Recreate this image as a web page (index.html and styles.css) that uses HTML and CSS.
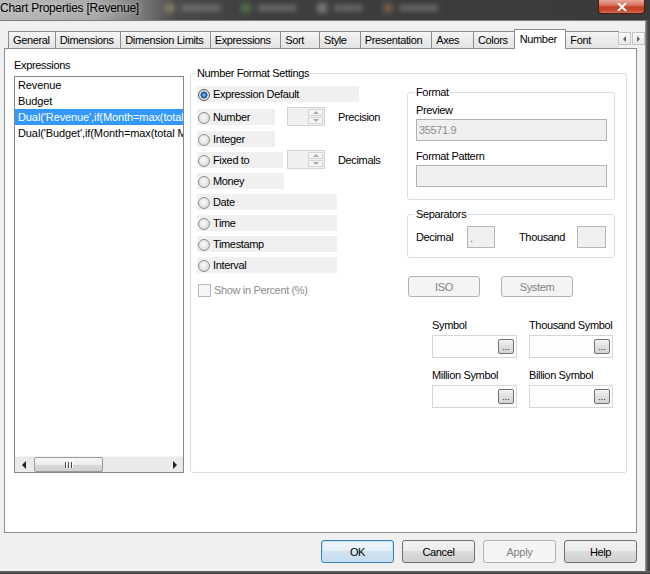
FILE: index.html
```html
<!DOCTYPE html>
<html>
<head>
<meta charset="utf-8">
<link rel="stylesheet" href="styles.css">
</head>
<body>
<div class="window">
  <div class="titlebar">
    <span class="title">Chart Properties [Revenue]</span>
    <div class="blurs">
      <span class="bl ic y"></span><span class="bl tx w40"></span>
      <span class="bl ic g"></span><span class="bl tx w40"></span>
      <span class="bl ic w"></span><span class="bl tx w30"></span>
      <span class="bl ic o"></span><span class="bl tx w40"></span>
    </div>
    <div class="close"><svg width="10" height="8" viewBox="0 0 10 8"><path d="M1.5 0.5 L8.5 7.5 M8.5 0.5 L1.5 7.5" stroke="#fff" stroke-width="2" stroke-linecap="square"/></svg></div>
  </div>
  <div class="middle">
    <div class="dialog">
      <div class="tabstrip">
        <div class="tab first w-general">General</div>
        <div class="tab w-dims">Dimensions</div>
        <div class="tab w-dimlim">Dimension Limits</div>
        <div class="tab w-expr">Expressions</div>
        <div class="tab w-sort">Sort</div>
        <div class="tab w-style">Style</div>
        <div class="tab w-pres">Presentation</div>
        <div class="tab w-axes">Axes</div>
        <div class="tab w-colors">Colors</div>
        <div class="tab sel w-number">Number</div>
        <div class="tab w-font">Font</div>
        <div class="tabscroll">
          <div class="tsb"><span class="tri-l small"></span></div>
          <div class="tsb"><span class="tri-r small"></span></div>
        </div>
      </div>
      <div class="panel">
        <div class="leftcol">
          <div class="lbl">Expressions</div>
          <div class="listbox">
            <div class="items">
              <div class="item">Revenue</div>
              <div class="item">Budget</div>
              <div class="item selected">Dual('Revenue',if(Month=max(total</div>
              <div class="item">Dual('Budget',if(Month=max(total M</div>
            </div>
            <div class="hscroll">
              <div class="sarrow"><span class="tri-l"></span></div>
              <div class="thumb"><span class="grip"></span><span class="grip"></span><span class="grip"></span></div>
              <div class="track"></div>
              <div class="sarrow"><span class="tri-r"></span></div>
            </div>
          </div>
        </div>
        <div class="group nfs">
          <span class="legend">Number Format Settings</span>
          <div class="radios">
            <div class="opt r1 w162"><span class="radio on"></span><span class="otext">Expression Default</span></div>
            <div class="spinrow r2">
              <div class="opt w78"><span class="radio"></span><span class="otext">Number</span></div>
              <div class="spin"><div class="spin-field"></div><div class="spin-btns"><div class="sb"><span class="tri-u"></span></div><div class="sb"><span class="tri-d"></span></div></div></div>
              <span class="spinlbl">Precision</span>
            </div>
            <div class="opt w78"><span class="radio"></span><span class="otext">Integer</span></div>
            <div class="spinrow">
              <div class="opt w86"><span class="radio"></span><span class="otext">Fixed to</span></div>
              <div class="spin"><div class="spin-field"></div><div class="spin-btns"><div class="sb"><span class="tri-u"></span></div><div class="sb"><span class="tri-d"></span></div></div></div>
              <span class="spinlbl">Decimals</span>
            </div>
            <div class="opt w87"><span class="radio"></span><span class="otext">Money</span></div>
            <div class="opt w140"><span class="radio"></span><span class="otext">Date</span></div>
            <div class="opt w140"><span class="radio"></span><span class="otext">Time</span></div>
            <div class="opt w140"><span class="radio"></span><span class="otext">Timestamp</span></div>
            <div class="opt w140"><span class="radio"></span><span class="otext">Interval</span></div>
            <div class="check"><span class="cbox"></span><span class="ctext">Show in Percent (%)</span></div>
          </div>
          <div class="rightcol">
            <div class="group fmt">
              <span class="legend">Format</span>
              <div class="flbl">Preview</div>
              <div class="field dis">35571.9</div>
              <div class="flbl gap">Format Pattern</div>
              <div class="field dis"></div>
            </div>
            <div class="group sep">
              <span class="legend">Separators</span>
              <div class="seprow">
                <span class="slbl dec">Decimal</span>
                <div class="sfield d">.</div>
                <span class="slbl th">Thousand</span>
                <div class="sfield t"></div>
              </div>
            </div>
            <div class="isorow">
              <div class="btn disabled iso">ISO</div>
              <div class="btn disabled sys">System</div>
            </div>
            <div class="symbols">
              <div class="sym">
                <div class="symlbl">Symbol</div>
                <div class="symfield"><div class="ell">...</div></div>
              </div>
              <div class="sym">
                <div class="symlbl">Thousand Symbol</div>
                <div class="symfield"><div class="ell">...</div></div>
              </div>
              <div class="sym">
                <div class="symlbl">Million Symbol</div>
                <div class="symfield"><div class="ell">...</div></div>
              </div>
              <div class="sym">
                <div class="symlbl">Billion Symbol</div>
                <div class="symfield"><div class="ell">...</div></div>
              </div>
            </div>
          </div>
        </div>
      </div>
      <div class="buttons">
        <div class="btn dlg default">OK</div>
        <div class="btn dlg">Cancel</div>
        <div class="btn dlg disabled">Apply</div>
        <div class="btn dlg">Help</div>
      </div>
    </div>
    <div class="frame-r"></div>
  </div>
  <div class="frame-b"></div>
</div>
</body>
</html>
```

FILE: styles.css
```css
* { box-sizing: border-box; }
html, body { margin: 0; padding: 0; }
body {
  width: 650px; height: 574px; overflow: hidden;
  background: #3a3a3a;
  font-family: "Liberation Sans", Arial, sans-serif;
  font-size: 11px; letter-spacing: -0.35px; color: #000;
}
.window { display: flex; flex-direction: column; width: 650px; height: 574px; }

/* title bar */
.titlebar {
  height: 20px; display: flex; align-items: flex-start;
  background: linear-gradient(90deg, #b9b9b9 0, #a9a9a9 95px, #7c7c7c 140px, #4a4a4a 175px, #3e3e3e 260px, #3a3a3a 100%);
}
.title { font-size: 12px; letter-spacing: -0.25px; line-height: 14px; padding-top: 1px; white-space: nowrap; color: #000;
  text-shadow: 0 0 6px rgba(255,255,255,0.6); }
.blurs { display: flex; align-items: center; height: 16px; margin-left: 12px; gap: 6px; opacity: 0.35; }
.bl { display: block; height: 8px; border-radius: 3px; filter: blur(2.5px); }
.bl.ic { width: 10px; height: 10px; margin-left: 14px; }
.bl.tx { background: #bbb; height: 6px; }
.bl.y { background: #d8c070; }
.bl.g { background: #70c050; }
.bl.w { background: #e0e0e0; }
.bl.o { background: #d89050; }
.w40 { width: 40px; } .w30 { width: 30px; }
.close {
  margin-left: auto; margin-right: 5px; width: 47px; height: 14px;
  display: flex; align-items: center; justify-content: center;
  border: 1px solid #4a1a10; border-top: none; border-radius: 0 0 4px 4px;
  background: linear-gradient(#e9a797 0, #d87360 40%, #c23f26 55%, #c9482c 80%, #d9735a 100%);
}

/* main */
.middle { display: flex; height: 551px; }
.dialog { width: 645px; background: #f0f0f0; border-top: 1px solid #7d7d7d; display: flex; flex-direction: column; }
.frame-r { width: 5px; background: linear-gradient(90deg, #a7a7a7 0, #7b7b7b 1px, #575757 2px, #444 4px, #3a3a3a 5px); }
.frame-b { height: 3px; background: linear-gradient(#6a6a6a, #3a3a3a); }

/* tabs */
.tabstrip { display: flex; align-items: flex-end; height: 20px; margin-top: 8px; padding-left: 8px; }
.tab {
  height: 17px; margin-bottom: 1px; margin-left: -1px;
  border: 1px solid #898c95; border-bottom: none;
  background: linear-gradient(#f6f6f6, #ebebeb 50%, #e3e3e3);
  padding-left: 4px; padding-top: 1px; line-height: 15px; white-space: nowrap; overflow: hidden;
}
.tab.first { margin-left: 0; }
.tab.sel { position: relative; z-index: 1; height: 20px; margin-bottom: 0; background: #fff; line-height: 17px; padding-left: 5px; padding-top: 1px; }
.w-general { width: 48px; } .w-dims { width: 67px; } .w-dimlim { width: 91px; }
.w-expr { width: 72px; } .w-sort { width: 40px; } .w-style { width: 42px; }
.w-pres { width: 73px; } .w-axes { width: 43px; } .w-colors { width: 42px; }
.w-number { width: 53px; } .w-font { width: 54px; border-right: none; }
.tabscroll { display: flex; margin-left: -1px; margin-bottom: 4px; gap: 1px; }
.tsb {
  width: 13px; height: 13px; border: 1px solid #c4c4c4; background: linear-gradient(#fbfbfb, #e9e9e9);
  display: flex; align-items: center; justify-content: center;
}
.tri-l, .tri-r, .tri-u, .tri-d { display: block; width: 0; height: 0; }
.tri-l { border-top: 4px solid transparent; border-bottom: 4px solid transparent; border-right: 4px solid #222; }
.tri-r { border-top: 4px solid transparent; border-bottom: 4px solid transparent; border-left: 4px solid #222; }
.tri-l.small { border-top-width: 3px; border-bottom-width: 3px; border-right: 3px solid #666; }
.tri-r.small { border-top-width: 3px; border-bottom-width: 3px; border-left: 3px solid #666; }
.tri-u { border-left: 3px solid transparent; border-right: 3px solid transparent; border-bottom: 3px solid #a8a8a8; }
.tri-d { border-left: 3px solid transparent; border-right: 3px solid transparent; border-top: 3px solid #a8a8a8; }

/* panel */
.panel {
  margin-left: 4px; margin-top: -1px; width: 633px; height: 485px;
  border: 1px solid #898c95; background: #fff;
  display: flex; align-items: flex-start; padding: 9px 0 0 9px;
}
.leftcol { width: 170px; }
.lbl { line-height: 14px; height: 14px; margin-left: 0; }
.listbox {
  margin-top: 4px; height: 397px; border: 1px solid #828790; background: #fff;
  display: flex; flex-direction: column;
}
.items { flex: 1; overflow: hidden; }
.item { height: 16px; line-height: 16px; padding-left: 3px; white-space: nowrap; overflow: hidden; letter-spacing: -0.1px; }
.item.selected { background: #3399ff; color: #fff; }
.hscroll { height: 16px; display: flex; align-items: center; background: #eaeaea; border-top: 1px solid #f4f4f4; }
.sarrow { width: 17px; height: 15px; display: flex; align-items: center; justify-content: center; }
.thumb {
  width: 69px; height: 15px; margin-left: 2px; border: 1px solid #9a9a9a; border-radius: 2px;
  background: linear-gradient(#f7f7f7, #ececec 50%, #d9d9d9 51%, #d2d2d2);
  display: flex; align-items: center; justify-content: center; gap: 1px;
}
.grip { display: block; width: 1px; height: 6px; background: #4a4a4a; box-shadow: 1px 0 0 #fff; margin-right: 1px; }
.track { flex: 1; }

/* group boxes */
.group { position: relative; border: 1px solid #d5dfe5; border-radius: 3px; }
.legend { position: absolute; top: -7px; left: 5px; line-height: 13px; padding: 0 1px; background: #fff; white-space: nowrap; }
.nfs { margin-top: 15px; margin-left: 6px; width: 437px; height: 400px; display: flex; align-items: flex-start; }
.radios { width: 200px; margin-left: 6px; margin-top: 12px; display: flex; flex-direction: column; gap: 5px; }
.opt { height: 16px; display: flex; align-items: center; background: #f0f0f0; white-space: nowrap; }
.r1 { margin-bottom: 2px; }
.r2 { margin-bottom: 1px; }
.w162 { width: 162px; } .w78 { width: 78px; } .w86 { width: 86px; } .w87 { width: 87px; } .w140 { width: 140px; }
.radio {
  display: block; flex: none; width: 12px; height: 12px; margin-left: 1px; margin-top: 2px; border-radius: 50%;
  border: 1px solid #8e8f8f;
  background: radial-gradient(circle at 45% 40%, #fbfbfb 0, #e6e6e6 50%, #cfcfcf 100%);
}
.radio.on { background: radial-gradient(circle at 50% 50%, #8ccdf5 0, #2a7bc5 2px, #1c4f8a 3.2px, #dcdcdc 3.8px, #f2f2f2 100%); border-color: #5a5a5a; }
.otext { margin-left: 3px; }
.spinrow { display: grid; grid-template-columns: 90px 38px auto; grid-template-rows: 16px; align-items: center; height: 16px; }
.spin { width: 38px; height: 19px; display: flex; border: 1px solid #d3d3d3; background: #f0f0f0; align-self: center; margin-top: -1px; }
.spin-field { flex: 1; }
.spin-btns { width: 16px; display: flex; flex-direction: column; padding: 1px 1px 1px 0; gap: 1px; }
.sb { flex: 1; border: 1px solid #d5d5d5; background: #f5f5f5; display: flex; align-items: center; justify-content: center; }
.spinlbl { margin-left: 13px; line-height: 14px; }
.check { display: flex; align-items: center; height: 14px; margin-top: 5px; }
.cbox { display: block; width: 13px; height: 13px; margin-left: 1px; border: 1px solid #b8b8b8; background: #f6f6f6; }
.ctext { margin-left: 3px; color: #8d8d8d; }

.rightcol { width: 208px; margin-left: 10px; margin-top: 18px; }
.fmt { height: 108px; padding: 10px 8px 0 8px; }
.fmt .legend, .sep .legend { left: 7px; }
.flbl { line-height: 14px; height: 14px; }
.flbl.gap { margin-top: 8px; }
.field { margin-top: 2px; height: 22px; width: 191px; }
.field.dis { background: #f0f0f0; border: 1px solid #b1b1b1; color: #8d8d8d; padding-left: 2px; line-height: 20px; }
.sep { margin-top: 14px; height: 44px; padding: 11px 8px 0 8px; }
.seprow { display: flex; align-items: center; height: 22px; }
.slbl.dec { width: 51px; }
.slbl.th { width: 58px; margin-left: 24px; }
.sfield { height: 22px; border: 1px solid #b6b6b6; background: #f0f0f0; color: #777; padding-left: 2px; line-height: 22px; }
.sfield.d { width: 28px; }
.sfield.t { width: 29px; }
.isorow { display: flex; margin-top: 18px; margin-left: 1px; gap: 21px; }
.btn {
  display: flex; align-items: center; justify-content: center; white-space: nowrap;
  border: 1px solid #707070; border-radius: 3px;
  background: linear-gradient(#f2f2f2 0, #ebebeb 49%, #dddddd 50%, #cfcfcf 100%);
}
.btn.iso, .btn.sys { width: 72px; height: 21px; }
.btn.disabled { border-color: #adb2b5; background: #f4f4f4; color: #838383; }
.symbols { margin-top: 21px; margin-left: 25px; display: grid; grid-template-columns: 85px 84px; column-gap: 12px; row-gap: 10px; }
.symlbl { line-height: 14px; height: 14px; white-space: nowrap; }
.symfield {
  margin-top: 3px; height: 23px; border: 1px solid #d6d6d6; background: #fdfdfd;
  display: flex; justify-content: flex-end; align-items: center; padding-right: 2px;
}
.ell {
  width: 16px; height: 15px; border: 1px solid #707070; border-radius: 2px;
  background: linear-gradient(#f4f4f4, #e0e0e0 50%, #d4d4d4);
  font-size: 9px; line-height: 15px; text-align: center; letter-spacing: 0; color: #222;
}

/* dialog buttons */
.buttons { display: flex; justify-content: flex-end; gap: 8px; padding-right: 8px; margin-top: 7px; }
.btn.dlg { width: 73px; height: 23px; }
.btn.default { border-color: #3c7fb1; background: linear-gradient(#f1f7fb 0, #e3eef6 49%, #d3e4f1 50%, #c6dcee 100%); box-shadow: inset 0 0 0 1px #bfe3f8; }
.btn.dlg.disabled { border-color: #adb2b5; background: #f4f4f4; color: #838383; }
```
